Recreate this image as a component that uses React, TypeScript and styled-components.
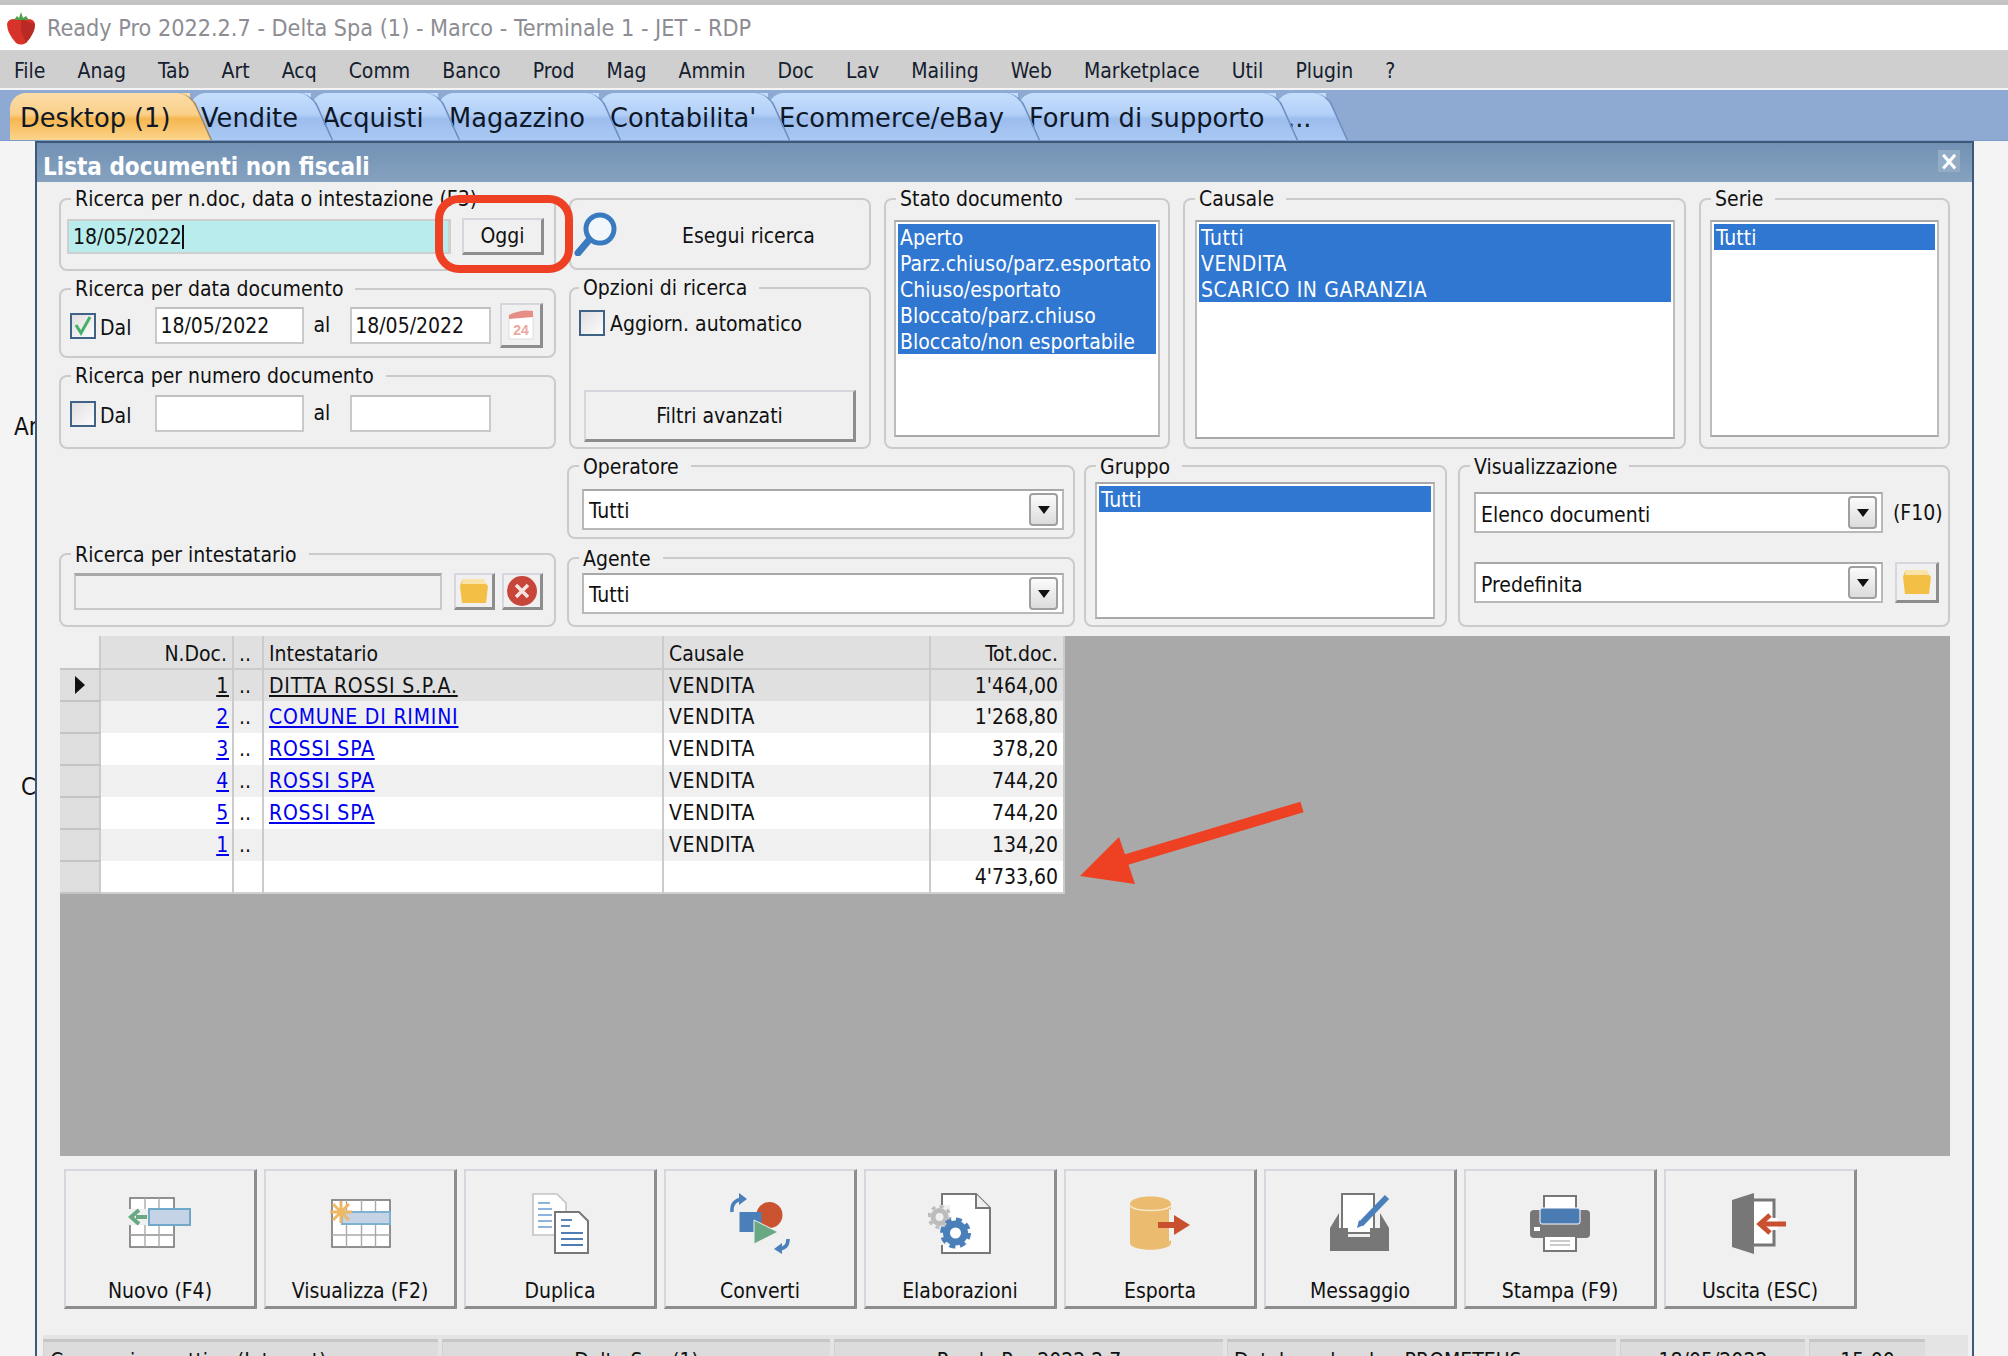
import React from 'react';
import styled, { createGlobalStyle } from 'styled-components';

const GlobalStyle = createGlobalStyle`
  html, body { margin: 0; padding: 0; background: #f3f3f3; }
  * { box-sizing: border-box; }
`;

const UI_FONT = `"DejaVu Sans Condensed", "DejaVu Sans", sans-serif`;

const Page = styled.div`
  width: 2008px;
  height: 1356px;
  position: relative;
  overflow: hidden;
  background: #f4f4f4;
  font-family: ${UI_FONT};
  font-size: 21px;
  color: #111;
`;

const TopEdge = styled.div`
  height: 5px;
  background: #c4c4c4;
`;

const TitleBar = styled.div`
  height: 45px;
  background: #fff;
  display: flex;
  align-items: center;
  gap: 11px;
  padding-left: 6px;
  color: #8d8d93;
  font-size: 23.2px;
`;

const MenuBar = styled.div`
  height: 38px;
  background: #cfcfcf;
  display: flex;
  align-items: center;
  gap: 32px;
  padding: 4px 0 0 14px;
`;

const MenuItem = styled.span`
  color: #15202e;
`;

const TabStrip = styled.div`
  margin-top: 2px;
  height: 51px;
  background: #8eaad3;
  border-bottom: 1px solid #7c9bcb;
  display: flex;
  padding: 3px 0 0 10px;
`;

const Tab = styled.div<{ $w: number; $active?: boolean; $z: number }>`
  position: relative;
  width: ${p => p.$w}px;
  height: 47px;
  z-index: ${p => p.$z};
  flex: none;
  padding: 10px 0 0 ${p => (p.$active ? 10 : 11)}px;
  font-family: "DejaVu Sans", sans-serif;
  font-size: 25.7px;
  line-height: 30px;
  white-space: nowrap;
  color: #0e1826;
  border-radius: 16px 0 0 0;
  background: ${p =>
    p.$active
      ? 'linear-gradient(#fbdca8, #fad08a 45%, #f6b650 55%, #fbd48c)'
      : 'linear-gradient(#c6defc, #b3d0f8 45%, #9dbdee 55%, #a9c8f3)'};
  &::after {
    content: '';
    position: absolute;
    top: 0;
    right: -12px;
    bottom: 0;
    width: 32px;
    transform: skewX(24deg);
    border-radius: 0 14px 0 0;
    background: inherit;
    border-right: 2px solid ${p => (p.$active ? '#a98a5c' : '#6f90c4')};
    z-index: -1;
  }
`;

const MainRow = styled.div`
  display: flex;
`;

const Gutter = styled.div`
  width: 35px;
  flex: none;
  overflow: hidden;
  padding: 272px 0 0 14px;
  white-space: nowrap;
  font-size: 24px;
  display: flex;
  flex-direction: column;
  gap: 332px;
`;

const GutterText = styled.span<{ $ml?: number }>`
  margin-left: ${p => p.$ml ?? 0}px;
`;

const Window = styled.div`
  width: 1939px;
  height: 1215px;
  flex: none;
  border: 2px solid #3c5a78;
  border-bottom: 0;
  background: #f0f0f0;
  overflow: hidden;
`;

const WindowHead = styled.div`
  height: 39px;
  background: linear-gradient(#7291b4, #86a2c0);
  display: flex;
  align-items: center;
  justify-content: space-between;
  padding: 9px 12px 0 6px;
  color: #fff;
  font-weight: 700;
  font-size: 24px;
`;

const CloseBox = styled.span`
  width: 22px;
  height: 22px;
  display: flex;
  align-items: center;
  justify-content: center;
  margin-top: -13px;
  color: #fff;
  background: #93acc6;
  font-size: 26px;
  line-height: 1;
`;

const WindowBody = styled.div`
  padding: 16px 22px 0;
`;

const UpperRow = styled.div`
  display: flex;
  gap: 13px;
  height: 251px;
`;

const StackLeft = styled.div`
  width: 497px;
  flex: none;
  display: grid;
  grid-template-rows: 73px 70px 74px;
  row-gap: 17px;
`;

const StackMid = styled.div`
  width: 302px;
  flex: none;
  display: grid;
  grid-template-rows: 72px 162px;
  row-gap: 17px;
`;

const LowerRow = styled.div`
  display: flex;
  height: 162px;
  margin-top: 16px;
`;

const LowerLeft = styled.div`
  width: 497px;
  flex: none;
  display: flex;
  flex-direction: column;
  justify-content: flex-end;
  margin-right: 11px;
`;

const LowerMid = styled.div`
  width: 508px;
  flex: none;
  display: grid;
  grid-template-rows: 74px 70px;
  row-gap: 18px;
  margin-right: 9px;
`;

const Group = styled.div<{ $w?: number; $h?: number; $column?: boolean; $mr?: number }>`
  position: relative;
  ${p => (p.$w ? `width: ${p.$w}px; flex: none;` : '')}
  ${p => (p.$h ? `height: ${p.$h}px;` : '')}
  margin-right: ${p => p.$mr ?? 0}px;
  border: 2px solid #cbcbcb;
  border-radius: 8px;
  display: flex;
  flex-direction: ${p => (p.$column ? 'column' : 'row')};
  align-items: flex-start;
`;

const Legend = styled.span<{ $left?: number; $top?: number }>`
  position: absolute;
  top: ${p => p.$top ?? -13}px;
  left: ${p => p.$left ?? 10}px;
  padding: 0 12px 0 4px;
  background: #f0f0f0;
  white-space: nowrap;
  line-height: 24px;
`;

const Field = styled.div<{ $w: number; $disabled?: boolean }>`
  width: ${p => p.$w}px;
  height: 37px;
  flex: none;
  background: ${p => (p.$disabled ? '#f0f0f0' : '#fff')};
  border: 2px solid #c9c9c9;
  border-top: ${p => (p.$disabled ? '3px solid #a8a8a8' : '2px solid #c0c0c0')};
  padding: 0 3px;
  line-height: 35px;
  white-space: nowrap;
`;

const SearchField = styled(Field)`
  height: 35px;
  background: #b9eded;
  border: 2px solid #cfcfcf;
  border-right-width: 3px;
  padding: 0 4px;
  line-height: 33px;
`;

const Caret = styled.span`
  display: inline-block;
  width: 2px;
  height: 24px;
  background: #111;
  vertical-align: -5px;
`;

const Raised = styled.button<{ $w: number; $h: number; $ml?: number }>`
  width: ${p => p.$w}px;
  height: ${p => p.$h}px;
  margin-left: ${p => p.$ml ?? 0}px;
  flex: none;
  padding: 0;
  font: inherit;
  color: inherit;
  background: #f0f0f0;
  border-style: solid;
  border-width: 2px 3px 3px 2px;
  border-color: #d6d6de #8d8d8d #8d8d8d #d6d6de;
  display: flex;
  align-items: center;
  justify-content: center;
`;

const Row = styled.div<{ $top: number; $left: number; $gap?: number }>`
  display: flex;
  align-items: center;
  gap: ${p => p.$gap ?? 0}px;
  padding: ${p => p.$top}px 0 0 ${p => p.$left}px;
`;

const Check = styled.span`
  width: 26px;
  height: 26px;
  flex: none;
  border: 2px solid #3f6286;
  background: linear-gradient(135deg, #e0e0e0, #fbfbfb);
  display: flex;
  align-items: center;
  justify-content: center;
`;

const Plain = styled.span<{ $ml?: number; $mr?: number; $up?: number }>`
  margin-left: ${p => p.$ml ?? 0}px;
  margin-right: ${p => p.$mr ?? 0}px;
  white-space: nowrap;
  position: relative;
  top: ${p => -(p.$up ?? 0)}px;
`;

const ListBox = styled.div<{ $m: string; $inset?: number }>`
  flex: 1;
  margin: ${p => p.$m};
  height: calc(100% - ${p => p.$inset ?? 30}px);
  background: #fff;
  border: 2px solid #a9a9a9;
  border-left-color: #bcbcbc;
  border-right-color: #bcbcbc;
  padding: 2px;
  overflow: hidden;
`;

const ListItem = styled.div`
  height: 26px;
  line-height: 29px;
  padding-left: 2px;
  background: #2f77d0;
  color: #fff;
  white-space: nowrap;
  overflow: hidden;
`;

const Caps = styled.span`
  letter-spacing: 0.6px;
`;

const Combo = styled.div<{ $w: number }>`
  width: ${p => p.$w}px;
  height: 41px;
  flex: none;
  background: #fff;
  border: 2px solid #b9b9b9;
  border-top-color: #a8a8a8;
  padding: 0 4px 0 5px;
  display: flex;
  align-items: center;
  justify-content: space-between;
  white-space: nowrap;
`;

const ComboArrow = styled.span`
  width: 29px;
  height: 33px;
  border: 2px solid #9f9f9f;
  border-radius: 4px;
  background: linear-gradient(#fbfbfb, #dcdcdc);
  display: flex;
  align-items: center;
  justify-content: center;
  &::after {
    content: '';
    border-style: solid;
    border-width: 8px 6px 0;
    border-color: #111 transparent transparent;
  }
`;

const GridArea = styled.div`
  margin: 9px 0 0 1px;
  width: 1890px;
  height: 520px;
  background: #a9a9a9;
`;

const DocTable = styled.table`
  width: 1004px;
  border-collapse: collapse;
  table-layout: fixed;
  background: #fff;
  border-bottom: 2px solid #d0d0d0;
  border-right: 2px solid #d0d0d0;
`;

const Th = styled.th<{ $right?: boolean }>`
  height: 33px;
  padding: 3px 5px 0;
  font-weight: 400;
  background: #e0e0e0;
  text-align: ${p => (p.$right ? 'right' : 'left')};
  border-right: 2px solid #cbcbcb;
  border-bottom: 2px solid #cbcbcb;
  white-space: nowrap;
  overflow: hidden;
`;

const Td = styled.td<{ $right?: boolean; $tone: string; $pr?: number }>`
  height: 32px;
  padding: 0 ${p => p.$pr ?? 5}px 0 5px;
  background: ${p => p.$tone};
  text-align: ${p => (p.$right ? 'right' : 'left')};
  border-right: 2px solid #cbcbcb;
  white-space: nowrap;
  overflow: hidden;
`;

const Indicator = styled.td<{ $head?: boolean }>`
  padding: 0 0 0 15px;
  background: ${p => (p.$head ? '#f0f0f0' : '#dedede')};
  border-bottom: 2px solid #c4c4c4;
  border-right: 2px solid #cbcbcb;
`;

const Pointer = styled.span`
  display: block;
  border-style: solid;
  border-width: 9px 0 9px 10px;
  border-color: transparent transparent transparent #111;
  width: 0;
`;

const DocLink = styled.span<{ $dark?: boolean }>`
  color: ${p => (p.$dark ? '#111' : '#0000ee')};
  text-decoration: underline;
  letter-spacing: 0.8px;
`;

const Toolbar = styled.div`
  display: flex;
  gap: 7px;
  margin: 13px 0 0 5px;
`;

const ToolButton = styled(Raised)`
  flex-direction: column;
  justify-content: flex-start;
  padding-top: 20px;
`;

const ToolIcon = styled.svg`
  width: 64px;
  height: 64px;
  flex: none;
`;

const ToolLabel = styled.span`
  margin-top: 23px;
  line-height: 26px;
`;

const StatusBar = styled.div`
  margin: 26px 4px 0 6px;
  height: 60px;
  padding: 4px 41px 0 0;
  background: #e4e4e4;
  display: flex;
  gap: 4px;
`;

const StatusCell = styled.div<{ $w: number; $center?: boolean }>`
  width: ${p => p.$w}px;
  height: 56px;
  flex: none;
  background: #dcdcdc;
  border-top: 3px solid #c6c6c6;
  border-left: 1px solid #d0d0d0;
  padding: 7px 6px 0;
  text-align: ${p => (p.$center ? 'center' : 'left')};
  white-space: nowrap;
  overflow: hidden;
`;

const Annotation = styled.div`
  position: absolute;
  left: 435px;
  top: 195px;
  width: 138px;
  height: 78px;
  border: 8px solid #ee4023;
  border-radius: 24px;
`;

const AnnotationArrow = styled.svg`
  position: absolute;
  left: 1070px;
  top: 795px;
`;

const Strawberry = () => (
  <svg width="30" height="34" viewBox="0 0 30 34">
    <path d="M1 13 Q2 8 8 8 L22 8 Q28 8 29 13 Q29 22 20 32 Q15 35 10 32 Q1 22 1 13Z" fill="#d8332a" />
    <path d="M15 8 L29 13 Q29 22 20 32 L15 20Z" fill="#b92a24" />
    <path d="M8 9 L11 5 L13 7 L15 1 L17 7 L20 5 L23 9Z" fill="#4fa04a" />
  </svg>
);

const Magnifier = () => (
  <svg width="46" height="46" viewBox="0 0 46 46">
    <circle cx="27" cy="19" r="14" fill="#f2f7fc" stroke="#3a7bbf" strokeWidth="5" />
    <path d="M16 30 L5 43" stroke="#3a7bbf" strokeWidth="7" strokeLinecap="round" />
  </svg>
);

const Tick = () => (
  <svg width="20" height="22" viewBox="0 0 20 22">
    <path d="M3 10 L8 18 L17 2" fill="none" stroke="#45b06a" strokeWidth="3" />
  </svg>
);

const CalendarIcon = () => (
  <svg width="30" height="32" viewBox="0 0 30 32">
    <rect x="3" y="6" width="24" height="24" fill="#fff" stroke="#ddd" />
    <path d="M3 6 Q15 0 27 2 L27 8 L3 10Z" fill="#e58e85" />
    <text x="15" y="26" textAnchor="middle" fontSize="14" fontWeight="700" fill="#eca79f" fontFamily="Liberation Sans, sans-serif">24</text>
  </svg>
);

const FolderIcon = () => (
  <svg width="30" height="26" viewBox="0 0 30 26">
    <path d="M2 5 L4 1 L24 1 L27 6 L29 8 L27 25 L3 25 L1 8Z" fill="#f3bf45" />
    <path d="M4 1 L24 1 L27 6 L3 6Z" fill="#f9e3a6" />
  </svg>
);

const ClearIcon = () => (
  <svg width="32" height="32" viewBox="0 0 32 32">
    <circle cx="16" cy="16" r="15" fill="#c8453a" />
    <path d="M10 10 L22 22 M22 10 L10 22" stroke="#f6e3e0" strokeWidth="3.5" />
  </svg>
);

const GridLines = ({ x, y, w, h, cols }: { x: number; y: number; w: number; h: number; cols: number[] }) => (
  <g>
    <rect x={x} y={y} width={w} height={h} fill="#fff" stroke="#777" strokeWidth="1.6" />
    {cols.map(c => (
      <path key={c} d={`M${c} ${y}V${y + h}`} stroke="#aaa" strokeWidth="1.4" />
    ))}
  </g>
);

const icons: Record<string, React.ReactNode> = {
  nuovo: (
    <>
      <GridLines x={2} y={7} w={44} h={49} cols={[17, 31]} />
      <path d="M2 44H46" stroke="#aaa" strokeWidth="2" />
      <rect x="21" y="18" width="41" height="16" fill="#c5d3e6" stroke="#6fa8c9" strokeWidth="2" />
      <rect x="0" y="18" width="20" height="16" fill="#f0f0f0" />
      <path d="M19 26H8 M11 19 L3 26 L11 33" fill="none" stroke="#69a883" strokeWidth="4" />
    </>
  ),
  visualizza: (
    <>
      <GridLines x={4} y={9} w={58} h={47} cols={[18.5, 33.5, 47.5]} />
      <path d="M4 44H62" stroke="#aaa" strokeWidth="1.4" />
      <rect x="14" y="21" width="48" height="12" fill="#c5d3e6" stroke="#7fb0cf" strokeWidth="2" />
      <path d="M13 10V32 M2 21H24 M5 13L21 29 M21 13L5 29" stroke="#eeb866" strokeWidth="3" />
    </>
  ),
  duplica: (
    <>
      <path d="M5 3H29L38 12V44H5Z" fill="#fff" stroke="#c4c4c4" strokeWidth="1.6" />
      <path d="M10 12H22M10 18H24M10 24H24M10 30H24M10 36H24" stroke="#8fb3dc" strokeWidth="2" />
      <path d="M27 21H51L60 30V62H27Z" fill="#fff" stroke="#777" strokeWidth="2" />
      <path d="M33 29H44M33 35H42" stroke="#5c86b8" strokeWidth="2.2" />
      <path d="M33 42H55M33 48H55M33 54H55" stroke="#4f7db6" strokeWidth="2.2" />
    </>
  ),
  converti: (
    <>
      <circle cx="41.5" cy="24" r="13" fill="#c9532f" />
      <rect x="11.5" y="21" width="22" height="20" fill="#4a7fb9" />
      <path d="M26 29 L50 41 L26 53Z" fill="#69a883" stroke="#f0f0f0" strokeWidth="1" />
      <path d="M4 21 Q3 9 15 8" fill="none" stroke="#4a7fb9" strokeWidth="3.5" />
      <path d="M11 2 L19 8 L11 14Z" fill="#4a7fb9" />
      <path d="M60 48 Q60 58 50 58" fill="none" stroke="#4a7fb9" strokeWidth="3.5" />
      <path d="M54 52 L46 58 L54 63Z" fill="#4a7fb9" />
    </>
  ),
  elabora: (
    <>
      <path d="M14 3H48L62 17V62H14Z" fill="#fff" stroke="#777" strokeWidth="2" />
      <path d="M48 3V17H62" fill="#f0f0f0" stroke="#777" strokeWidth="2" />
      <rect x="0" y="14" width="22" height="26" fill="#f0f0f0" />
      <rect x="12" y="32" width="10" height="22" fill="#f0f0f0" />
      <circle cx="11.5" cy="26" r="6.5" fill="none" stroke="#bcbcbc" strokeWidth="5" />
      <circle cx="11.5" cy="26" r="10.5" fill="none" stroke="#bcbcbc" strokeWidth="3" strokeDasharray="4 4.2" />
      <circle cx="27.5" cy="42" r="9" fill="none" stroke="#4a7fb9" strokeWidth="7" />
      <circle cx="27.5" cy="42" r="13.5" fill="none" stroke="#4a7fb9" strokeWidth="4" strokeDasharray="6 4.6" />
    </>
  ),
  esporta: (
    <>
      <path d="M2 13 C2 3 43 3 43 13 V52 C43 61 2 61 2 52Z" fill="#ebbc70" />
      <path d="M2 15 C8 21 37 21 43 15" fill="none" stroke="#f7e6c8" strokeWidth="1.6" />
      <path d="M30 34H48M44 23 L62 34 L44 45Z" stroke="#f0f0f0" strokeWidth="6" fill="#f0f0f0" />
      <path d="M30 34H48" stroke="#c9502f" strokeWidth="6" />
      <path d="M46 24 L62 34 L46 44Z" fill="#c9502f" />
    </>
  ),
  messaggio: (
    <>
      <path d="M14 3H46V42H14Z" fill="#fff" stroke="#777" strokeWidth="2" />
      <path d="M11 22L2 37V60H61V37L52 22V37H42V46H20V37H11Z" fill="#777" />
      <path d="M59 6 L33 33" stroke="#4a7fb9" strokeWidth="6" />
      <path d="M29 37 L31 29 L36 34Z" fill="#4a7fb9" />
    </>
  ),
  stampa: (
    <>
      <rect x="16" y="5" width="32" height="14" fill="#fff" stroke="#777" strokeWidth="2" />
      <rect x="2" y="19" width="60" height="28" rx="4" fill="#777" />
      <rect x="12" y="17" width="40" height="16" rx="2" fill="#4a7bb3" stroke="#fff" strokeWidth="1" />
      <rect x="6" y="36" width="6" height="4" fill="#fff" />
      <rect x="16" y="45" width="32" height="15" fill="#fff" stroke="#777" strokeWidth="2" />
      <path d="M22 50H42M22 54H42" stroke="#bbb" strokeWidth="1.6" />
    </>
  ),
  uscita: (
    <>
      <path d="M24 9H46V54H24Z" fill="#fff" stroke="#777" strokeWidth="3" />
      <path d="M4 9 L26 2 L26 63 L4 56Z" fill="#777" />
      <rect x="44" y="27" width="6" height="12" fill="#fff" />
      <path d="M36 33H58" stroke="#c9502f" strokeWidth="5" />
      <path d="M42 24 L32 33 L42 42" fill="none" stroke="#c9502f" strokeWidth="5" />
    </>
  ),
};

const TABS = [
  { label: 'Desktop (1)', w: 180 },
  { label: 'Vendite', w: 121 },
  { label: 'Acquisti', w: 127 },
  { label: 'Magazzino', w: 161 },
  { label: "Contabilita'", w: 169 },
  { label: 'Ecommerce/eBay', w: 250 },
  { label: 'Forum di supporto', w: 258 },
  { label: '...', w: 50 },
];

const MENU = ['File', 'Anag', 'Tab', 'Art', 'Acq', 'Comm', 'Banco', 'Prod', 'Mag', 'Ammin', 'Doc', 'Lav', 'Mailing', 'Web', 'Marketplace', 'Util', 'Plugin', '?'];

const ROWS = [
  { n: '1', name: 'DITTA ROSSI S.P.A.', tot: "1'464,00", tone: '#e0e0e0', dark: true },
  { n: '2', name: 'COMUNE DI RIMINI', tot: "1'268,80", tone: '#f0f0f0' },
  { n: '3', name: 'ROSSI SPA', tot: '378,20', tone: '#ffffff' },
  { n: '4', name: 'ROSSI SPA', tot: '744,20', tone: '#f0f0f0' },
  { n: '5', name: 'ROSSI SPA', tot: '744,20', tone: '#ffffff' },
  { n: '1', name: '', tot: '134,20', tone: '#f0f0f0' },
];

const TOOLS = [
  { icon: 'nuovo', label: 'Nuovo (F4)' },
  { icon: 'visualizza', label: 'Visualizza (F2)' },
  { icon: 'duplica', label: 'Duplica' },
  { icon: 'converti', label: 'Converti' },
  { icon: 'elabora', label: 'Elaborazioni' },
  { icon: 'esporta', label: 'Esporta' },
  { icon: 'messaggio', label: 'Messaggio' },
  { icon: 'stampa', label: 'Stampa (F9)' },
  { icon: 'uscita', label: 'Uscita (ESC)' },
];

const STATUS = [
  { w: 395, text: 'Connessione attiva (Internet)' },
  { w: 388, text: 'Delta Spa (1)', center: true },
  { w: 389, text: 'Ready Pro 2022.2.7', center: true },
  { w: 389, text: 'Database locale - PROMETEUS' },
  { w: 185, text: '18/05/2022', center: true },
  { w: 116, text: '15:00', center: true },
];

const App: React.FC = () => {
  return (
    <Page>
      <GlobalStyle />
      <TopEdge />
      <TitleBar>
        <Strawberry />
        <span>Ready Pro 2022.2.7 - Delta Spa (1) - Marco - Terminale 1 - JET - RDP</span>
      </TitleBar>
      <MenuBar>
        {MENU.map(m => (
          <MenuItem key={m}>{m}</MenuItem>
        ))}
      </MenuBar>
      <TabStrip>
        {TABS.map((t, i) => (
          <Tab key={t.label} $w={t.w} $active={i === 0} $z={20 - i}>
            {t.label}
          </Tab>
        ))}
      </TabStrip>
      <MainRow>
        <Gutter>
          <GutterText>An</GutterText>
          <GutterText $ml={7}>C</GutterText>
        </Gutter>
        <Window>
          <WindowHead>
            <span>Lista documenti non fiscali</span>
            <CloseBox>×</CloseBox>
          </WindowHead>
          <WindowBody>
            <UpperRow>
              <StackLeft>
                <Group>
                  <Legend>Ricerca per n.doc, data o intestazione (F3)</Legend>
                  <Row $top={18} $left={6} $gap={11}>
                    <SearchField $w={384}>
                      18/05/2022
                      <Caret />
                    </SearchField>
                    <Raised $w={82} $h={37}>Oggi</Raised>
                  </Row>
                </Group>
                <Group>
                  <Legend>Ricerca per data documento</Legend>
                  <Row $top={13} $left={9}>
                    <Check>
                      <Tick />
                    </Check>
                    <Plain $ml={4} $mr={24} $up={-2}>Dal</Plain>
                    <Field $w={149}>18/05/2022</Field>
                    <Plain $ml={9} $mr={20} $up={1}>al</Plain>
                    <Field $w={141}>18/05/2022</Field>
                    <Raised $w={43} $h={45} $ml={9}>
                      <CalendarIcon />
                    </Raised>
                  </Row>
                </Group>
                <Group>
                  <Legend>Ricerca per numero documento</Legend>
                  <Row $top={18} $left={9}>
                    <Check />
                    <Plain $ml={4} $mr={24} $up={-2}>Dal</Plain>
                    <Field $w={149} />
                    <Plain $ml={9} $mr={20} $up={1}>al</Plain>
                    <Field $w={141} />
                  </Row>
                </Group>
              </StackLeft>
              <StackMid>
                <Group>
                  <Row $top={10} $left={2}>
                    <Magnifier />
                    <Plain $ml={63} $up={-3}>Esegui ricerca</Plain>
                  </Row>
                </Group>
                <Group $column>
                  <Legend $left={8}>Opzioni di ricerca</Legend>
                  <Row $top={21} $left={8}>
                    <Check />
                    <Plain $ml={5} $up={-1}>Aggiorn. automatico</Plain>
                  </Row>
                  <Row $top={54} $left={13}>
                    <Raised $w={272} $h={52}>Filtri avanzati</Raised>
                  </Row>
                </Group>
              </StackMid>
              <Group $w={286}>
                <Legend>Stato documento</Legend>
                <ListBox $m="20px 8px 0 8px">
                  {['Aperto', 'Parz.chiuso/parz.esportato', 'Chiuso/esportato', 'Bloccato/parz.chiuso', 'Bloccato/non esportabile'].map(s => (
                    <ListItem key={s}>{s}</ListItem>
                  ))}
                </ListBox>
              </Group>
              <Group $w={503}>
                <Legend>Causale</Legend>
                <ListBox $m="20px 9px 0 10px" $inset={28}>
                  {['Tutti', 'VENDITA', 'SCARICO IN GARANZIA'].map(s => (
                    <ListItem key={s}>
                      <Caps>{s}</Caps>
                    </ListItem>
                  ))}
                </ListBox>
              </Group>
              <Group $w={251}>
                <Legend>Serie</Legend>
                <ListBox $m="20px 9px 0 9px">
                  <ListItem>Tutti</ListItem>
                </ListBox>
              </Group>
            </UpperRow>
            <LowerRow>
              <LowerLeft>
                <Group $h={74}>
                  <Legend $top={-12}>Ricerca per intestatario</Legend>
                  <Row $top={18} $left={13}>
                    <Field $w={368} $disabled />
                    <Raised $w={41} $h={37} $ml={12}>
                      <FolderIcon />
                    </Raised>
                    <Raised $w={41} $h={37} $ml={7}>
                      <ClearIcon />
                    </Raised>
                  </Row>
                </Group>
              </LowerLeft>
              <LowerMid>
                <Group>
                  <Legend $top={-12}>Operatore</Legend>
                  <Row $top={22} $left={13}>
                    <Combo $w={482}>
                      <Plain $up={-1}>Tutti</Plain>
                      <ComboArrow />
                    </Combo>
                  </Row>
                </Group>
                <Group>
                  <Legend $top={-12}>Agente</Legend>
                  <Row $top={14} $left={13}>
                    <Combo $w={482}>
                      <Plain $up={-1}>Tutti</Plain>
                      <ComboArrow />
                    </Combo>
                  </Row>
                </Group>
              </LowerMid>
              <Group $w={363} $mr={11}>
                <Legend $top={-12}>Gruppo</Legend>
                <ListBox $m="15px 10px 0 9px" $inset={21}>
                  <ListItem>Tutti</ListItem>
                </ListBox>
              </Group>
              <Group $w={492} $column>
                <Legend $top={-12}>Visualizzazione</Legend>
                <Row $top={25} $left={14}>
                  <Combo $w={409}>
                    <Plain $up={-2}>Elenco documenti</Plain>
                    <ComboArrow />
                  </Combo>
                  <Plain $ml={10}>(F10)</Plain>
                </Row>
                <Row $top={29} $left={14}>
                  <Combo $w={409}>
                    <Plain $up={-2}>Predefinita</Plain>
                    <ComboArrow />
                  </Combo>
                  <Raised $w={44} $h={41} $ml={12}>
                    <FolderIcon />
                  </Raised>
                </Row>
              </Group>
            </LowerRow>
            <GridArea>
              <DocTable>
                <colgroup>
                  <col style={{ width: 40 }} />
                  <col style={{ width: 133 }} />
                  <col style={{ width: 30 }} />
                  <col style={{ width: 400 }} />
                  <col style={{ width: 267 }} />
                  <col style={{ width: 134 }} />
                </colgroup>
                <thead>
                  <tr>
                    <Indicator $head as="th" />
                    <Th $right>N.Doc.</Th>
                    <Th>..</Th>
                    <Th>Intestatario</Th>
                    <Th>Causale</Th>
                    <Th $right>Tot.doc.</Th>
                  </tr>
                </thead>
                <tbody>
                  {ROWS.map((r, i) => (
                    <tr key={i}>
                      <Indicator>{i === 0 && <Pointer />}</Indicator>
                      <Td $right $tone={r.tone} $pr={3}>
                        <DocLink $dark={r.dark}>{r.n}</DocLink>
                      </Td>
                      <Td $tone={r.tone}>..</Td>
                      <Td $tone={r.tone}>
                        <DocLink $dark={r.dark}>{r.name}</DocLink>
                      </Td>
                      <Td $tone={r.tone}>
                        <Caps>VENDITA</Caps>
                      </Td>
                      <Td $right $tone={r.tone}>{r.tot}</Td>
                    </tr>
                  ))}
                  <tr>
                    <Indicator />
                    <Td $tone="#fff" />
                    <Td $tone="#fff" />
                    <Td $tone="#fff" />
                    <Td $tone="#fff" />
                    <Td $right $tone="#fff">4'733,60</Td>
                  </tr>
                </tbody>
              </DocTable>
            </GridArea>
            <Toolbar>
              {TOOLS.map(t => (
                <ToolButton key={t.icon} $w={193} $h={140}>
                  <ToolIcon viewBox="0 0 64 64">{icons[t.icon]}</ToolIcon>
                  <ToolLabel>{t.label}</ToolLabel>
                </ToolButton>
              ))}
            </Toolbar>
          </WindowBody>
          <StatusBar>
            {STATUS.map(s => (
              <StatusCell key={s.text} $w={s.w} $center={s.center}>
                {s.text}
              </StatusCell>
            ))}
          </StatusBar>
        </Window>
      </MainRow>
      <Annotation />
      <AnnotationArrow width="245" height="100" viewBox="0 0 245 100">
        <path d="M232 12 L55 65" stroke="#ee4023" strokeWidth="11" />
        <path d="M10 81 L49 42 L65 89Z" fill="#ee4023" />
      </AnnotationArrow>
    </Page>
  );
};

export default App;
